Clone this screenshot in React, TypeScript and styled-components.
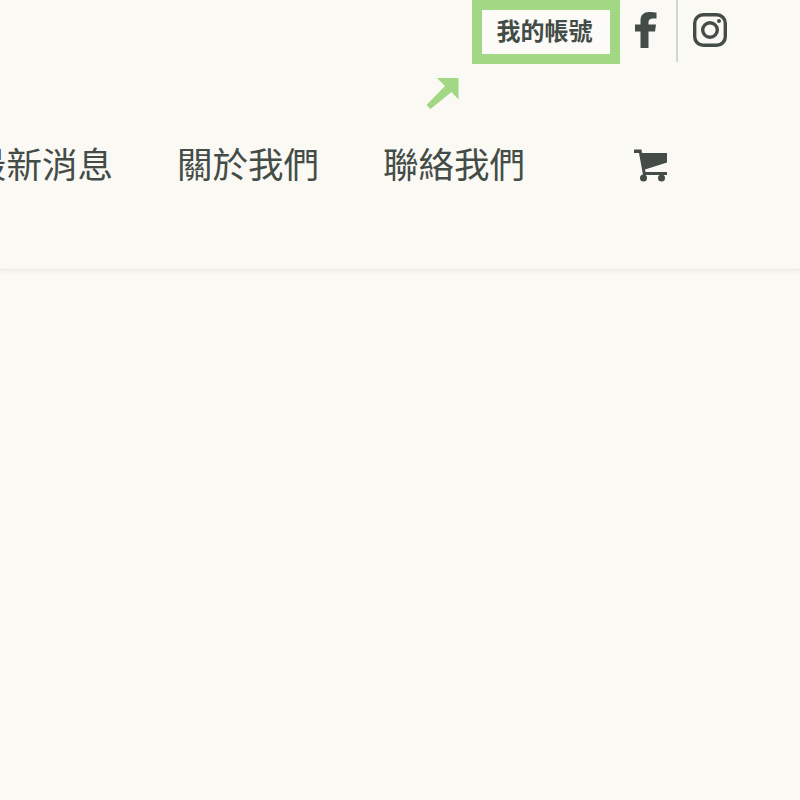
import React from "react";
import styled, { createGlobalStyle } from "styled-components";

const Global = createGlobalStyle`
  html, body { margin: 0; padding: 0; background: #fcfaf5; }
  body { font-family: "Liberation Serif", "Noto Sans CJK TC", serif; overflow: hidden; }
`;
const Page = styled.div`
  width: 800px; height: 800px; overflow: hidden; background: #fbf9f4;
`;
const Header = styled.header`
  height: 270px; box-sizing: border-box; border-bottom: 1px solid #eeebe5;
  box-shadow: 0 2px 5px rgba(0,0,0,.045); display: flex; flex-direction: column; align-items: flex-end;
`;
const TopBar = styled.div`
  display: flex; align-items: flex-start; height: 64px; padding-right: 73px; flex: none;
`;
const Account = styled.a`
  width: 148px; height: 64px; box-sizing: border-box; border: 10px solid #a2d884; background: #fcfbf7;
  color: #444c47; font-size: 24px; font-weight: 700; display: flex; align-items: center; justify-content: center;
  padding: 0 3px 6px 0;
`;
const Social = styled.a`
  color: #444c47; display: flex; align-items: center; justify-content: center; height: 62px;
`;
const Facebook = styled(Social)`
  width: 41px; box-sizing: content-box; border-right: 2px solid #d2d8cb; justify-content: flex-start;
  padding: 0 0 2px 15px; height: 60px;
`;
const Instagram = styled(Social)`
  margin-left: 15px; width: 34px; padding-bottom: 3px; height: 59px;
`;
const ArrowRow = styled.div`
  height: 44px; align-self: flex-start; padding: 13px 0 0 425px; box-sizing: border-box; flex: none;
  svg { display: block; }
`;
const Nav = styled.nav`
  display: flex; align-items: center; white-space: nowrap; padding-right: 132px; height: 44px; margin-top: 36px; flex: none;
`;
const NavItem = styled.a`
  font-size: 35.5px; color: #444c47; margin-right: 64px; line-height: 44px; flex: none;
`;
const Cart = styled.a`
  color: #444c47; display: flex; margin-left: 45px; margin-top: -1px;
`;

export default function App() {
  return (
    <Page>
      <Global />
      <Header>
        <TopBar>
          <Account>我的帳號</Account>
          <Facebook aria-label="facebook">
            <svg width="22" height="36" viewBox="0 0 22 36" fill="currentColor">
              <path d="M5.500 36V19.500H0v-7h5.500V8C5.500 3 9 0 14 0c2.500 0 6 .300 7.500.600V6.500H18c-3 0-4.500 1-4.500 4v2h7.500l-1 7h-6.500V36z" />
            </svg>
          </Facebook>
          <Instagram aria-label="instagram">
            <svg width="34" height="34" viewBox="0 0 34 34" fill="none" stroke="currentColor" strokeWidth="3.400">
              <rect x="1.700" y="1.700" width="30.600" height="30.600" rx="8.500" />
              <circle cx="17" cy="17" r="7.300" />
              <circle cx="26" cy="8" r="2" fill="currentColor" stroke="none" />
            </svg>
          </Instagram>
        </TopBar>
        <ArrowRow>
          <svg width="35" height="32" viewBox="0 0 35 32" fill="#a2d884">
            <path d="M12 1h21.500v21.500l-7-7.500L5.500 32 1.500 28 20 9z" />
          </svg>
        </ArrowRow>
        <Nav>
          <NavItem>最新消息</NavItem>
          <NavItem>關於我們</NavItem>
          <NavItem>聯絡我們</NavItem>
          <Cart aria-label="cart">
            <svg width="34" height="33" viewBox="0 0 34 33" fill="currentColor">
              <path d="M0 .500H7.500L8 4H33V13.500L11 20.500 11.500 23H33V26H9L5 4H0z" />
              <circle cx="9.500" cy="29" r="3.500" />
              <circle cx="27.500" cy="29" r="3.500" />
            </svg>
          </Cart>
        </Nav>
      </Header>
    </Page>
  );
}
